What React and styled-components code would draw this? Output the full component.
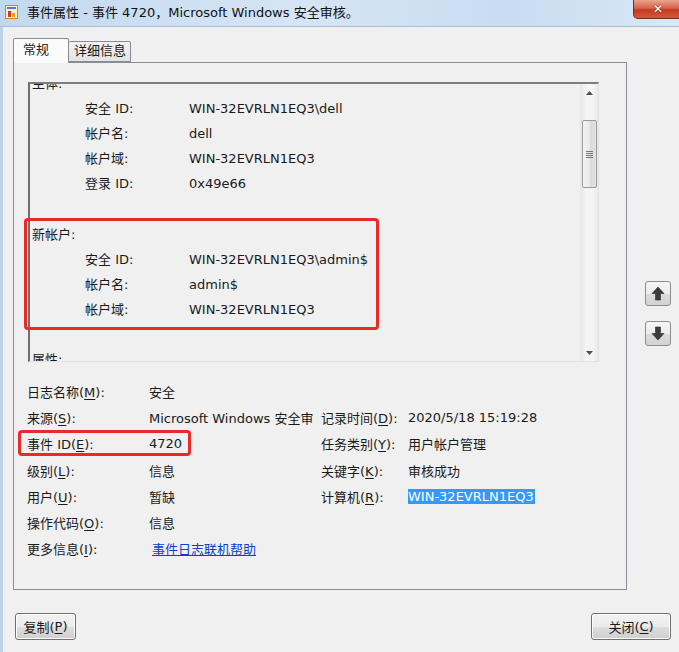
import React from "react";
import styled, { createGlobalStyle } from "styled-components";

const GlobalStyle = createGlobalStyle`
  html, body {
    margin: 0;
    padding: 0;
    background: #f0f0f0;
  }
  body {
    font-family: "DejaVu Sans", "Noto Sans CJK SC", sans-serif;
    font-size: 13px;
    color: #1a1a1a;
  }
`;

const Window = styled.div`
  position: relative;
  width: 679px;
  height: 652px;
  overflow: hidden;
  display: flex;
  flex-direction: column;
  background: #f0f0f0;
`;

const TitleBar = styled.div`
  height: 27px;
  flex: none;
  display: flex;
  align-items: flex-start;
  gap: 9px;
  padding: 5px 0 0 5px;
  box-sizing: border-box;
  background: linear-gradient(90deg, #c3d8ee 0%, #d6e5f5 45%, #c9dcf0 75%, #d9e7f5 100%);
  border-bottom: 1px solid #a6bfd9;
`;

const TitleText = styled.span`
  font-size: 13px;
  line-height: 15px;
  color: #111;
  white-space: nowrap;
`;

const CloseButton = styled.div`
  position: absolute;
  z-index: 3;
  top: 0;
  right: -4px;
  width: 48px;
  height: 18px;
  border: 1px solid #7a2a1c;
  border-top: none;
  border-radius: 0 0 5px 5px;
  background-color: #c9452c;
  background-image: linear-gradient(180deg, #e9a48f 0%, #d8634a 45%, #c2391f 55%, #d45a3c 100%);
  display: flex;
  align-items: center;
  justify-content: center;
  color: #fff;
  font-weight: bold;
  font-size: 12px;
  text-shadow: 0 0 2px #6b1e10;
`;

const Client = styled.div`
  flex: 1;
  display: flex;
  flex-direction: column;
  border-left: 3px solid #bcd2ea;
`;

const TopRow = styled.div`
  display: flex;
  padding: 11px 0 0 10px;
`;

const Main = styled.div`
  width: 614px;
  display: flex;
  flex-direction: column;
`;

const TabStrip = styled.div`
  height: 24px;
  display: flex;
  align-items: flex-end;
  position: relative;
  z-index: 1;
`;

const Tab = styled.div`
  box-sizing: border-box;
  height: ${(p) => (p.$active ? "25px" : "21px")};
  width: ${(p) => p.$width}px;
  padding-left: ${(p) => (p.$active ? "9px" : "5px")};
  border: 1px solid #898c95;
  border-bottom: ${(p) => (p.$active ? "none" : "1px solid #898c95")};
  border-left: ${(p) => (p.$active ? "1px solid #898c95" : "none")};
  border-radius: 2px 2px 0 0;
  background: ${(p) =>
    p.$active ? "#fbfbfb" : "linear-gradient(180deg, #f2f2f2 0%, #e3e3e3 100%)"};
  margin-bottom: ${(p) => (p.$active ? "-1px" : "0")};
  line-height: ${(p) => (p.$active ? "21px" : "18px")};
  font-size: 13px;
`;

const Panel = styled.div`
  box-sizing: border-box;
  height: 528px;
  border: 1px solid #898c95;
  background: #f0f0f0;
  padding: 19px 27px 0 14px;
`;

const TextBox = styled.div`
  position: relative;
  box-sizing: border-box;
  height: 280px;
  border-top: 2px solid #7d7d7d;
  border-left: 2px solid #6e6e6e;
  border-right: 1px solid #e2e2e2;
  border-bottom: 1px solid #e2e2e2;
  overflow: hidden;
  display: flex;
`;

const TextScroll = styled.div`
  flex: 1;
  overflow: hidden;
  padding-left: 2px;
`;

const TextContent = styled.div`
  margin-top: -13px;
`;

const Line = styled.div`
  height: 25.1px;
  line-height: 25.1px;
  display: flex;
  white-space: nowrap;
  padding-left: ${(p) => (p.$indent ? "53px" : "0")};
`;

const LineLabel = styled.span`
  width: 104px;
  flex: none;
`;

const ScrollBar = styled.div`
  width: 17px;
  flex: none;
  background: linear-gradient(90deg, #e8e8e8 0%, #f4f4f4 30%, #f4f4f4 70%, #e9e9e9 100%);
  border-left: 1px solid #e6e6e6;
  display: flex;
  flex-direction: column;
  align-items: center;
`;

const ScrollArrow = styled.div`
  height: 17px;
  width: 100%;
  display: flex;
  align-items: center;
  justify-content: center;
  flex: none;
`;

const Thumb = styled.div`
  margin-top: 19px;
  width: 15px;
  height: 68px;
  box-sizing: border-box;
  border: 1px solid #9a9a9a;
  border-radius: 2px;
  background: linear-gradient(90deg, #f4f4f4 0%, #e8e8e8 50%, #d8d8d8 51%, #e2e2e2 100%);
  display: flex;
  align-items: center;
  justify-content: center;
`;

const Grip = styled.div`
  width: 7px;
  height: 7px;
  background: repeating-linear-gradient(180deg, #7a7a7a 0 1px, transparent 1px 2px);
`;

const Spacer = styled.div`
  flex: 1;
`;

const InfoGrid = styled.div`
  margin: 16px 0 0 -1px;
  display: grid;
  grid-template-columns: 122px 172px 87px 1fr;
  grid-auto-rows: 26.3px;
  align-items: center;
  white-space: nowrap;
`;

const Cell = styled.div`
  min-width: 0;
  overflow: hidden;
  max-width: ${(p) => (p.$clip ? "164px" : "none")};
`;

const Key = styled.span`
  text-decoration: underline;
  text-underline-offset: 2px;
`;

const Selected = styled.span`
  background: #3399ff;
  color: #fff;
  padding: 1px 1px 2px 0;
`;

const HelpLink = styled.a`
  color: #0b3fd4;
  text-decoration: underline;
  margin-left: 3px;
`;

const Side = styled.div`
  display: flex;
  flex-direction: column;
  gap: 15px;
  padding: 243px 0 0 18px;
`;

const ArrowButton = styled.div`
  width: 26px;
  height: 25px;
  box-sizing: border-box;
  border: 1px solid #8d8d8d;
  border-radius: 3px;
  background: linear-gradient(180deg, #f6f6f6 0%, #ececec 50%, #dcdcdc 51%, #d2d2d2 100%);
  display: flex;
  align-items: center;
  justify-content: center;
`;

const Footer = styled.div`
  display: flex;
  justify-content: space-between;
  padding: 23px 8px 0 12px;
`;

const Button = styled.div`
  width: ${(p) => p.$width}px;
  height: 27px;
  box-sizing: border-box;
  border: 1px solid #707070;
  border-radius: 3px;
  background: linear-gradient(180deg, #f2f2f2 0%, #ebebeb 50%, #dddddd 51%, #cfcfcf 100%);
  box-shadow: inset 0 0 0 1px #fcfcfc;
  display: flex;
  align-items: center;
  justify-content: center;
  font-size: 13px;
`;

const Annotation = styled.div`
  position: absolute;
  left: ${(p) => p.$x}px;
  top: ${(p) => p.$y}px;
  width: ${(p) => p.$w}px;
  height: ${(p) => p.$h}px;
  box-sizing: border-box;
  border: 3px solid #ea2a2a;
  border-radius: 4px;
  pointer-events: none;
`;

const AppIcon = () => (
  <svg width="13" height="14" viewBox="0 0 13 14">
    <rect x="0.5" y="0.5" width="12" height="13" fill="#f7f1d0" stroke="#c98a1a" />
    <rect x="2" y="2" width="9" height="2" fill="#4a7fd0" />
    <rect x="3" y="6" width="3" height="6" fill="#d23a2a" />
    <rect x="7" y="8" width="3" height="4" fill="#e0a020" />
  </svg>
);

const Triangle = ({ up }) => (
  <svg width="7" height="4" viewBox="0 0 7 4">
    <path d={up ? "M0 4 L3.5 0 L7 4 Z" : "M0 0 L3.5 4 L7 0 Z"} fill="#4d4d4d" />
  </svg>
);

const BigArrow = ({ up }) => (
  <svg width="14" height="15" viewBox="0 0 14 15">
    <path
      d={
        up
          ? "M7 1 L13 7.5 L9.5 7.5 L9.5 14 L4.5 14 L4.5 7.5 L1 7.5 Z"
          : "M7 14 L13 7.5 L9.5 7.5 L9.5 1 L4.5 1 L4.5 7.5 L1 7.5 Z"
      }
      fill="#3c3c3c"
      stroke="#2a2a2a"
      strokeWidth="0.6"
      strokeLinejoin="round"
    />
  </svg>
);

const eventText = [
  { head: "主体:" },
  { label: "安全 ID:", value: "WIN-32EVRLN1EQ3\\dell" },
  { label: "帐户名:", value: "dell" },
  { label: "帐户域:", value: "WIN-32EVRLN1EQ3" },
  { label: "登录 ID:", value: "0x49e66" },
  { head: "" },
  { head: "新帐户:" },
  { label: "安全 ID:", value: "WIN-32EVRLN1EQ3\\admin$" },
  { label: "帐户名:", value: "admin$" },
  { label: "帐户域:", value: "WIN-32EVRLN1EQ3" },
  { head: "" },
  { head: "属性:" },
  { label: "SAM 帐户名:", value: "admin$" },
];

const Label = ({ text, k }) => (
  <>
    {text}(<Key>{k}</Key>):
  </>
);

export default function App() {
  return (
    <Window>
      <GlobalStyle />
      <TitleBar>
        <AppIcon />
        <TitleText>事件属性 - 事件 4720，Microsoft Windows 安全审核。</TitleText>
      </TitleBar>
      <CloseButton>✕</CloseButton>
      <Client>
        <TopRow>
          <Main>
            <TabStrip>
              <Tab $active $width={56}>常规</Tab>
              <Tab $width={62}>详细信息</Tab>
            </TabStrip>
            <Panel>
              <TextBox>
                <TextScroll>
                  <TextContent>
                    {eventText.map((l, i) =>
                      l.label ? (
                        <Line key={i} $indent>
                          <LineLabel>{l.label}</LineLabel>
                          <span>{l.value}</span>
                        </Line>
                      ) : (
                        <Line key={i}>{l.head}</Line>
                      )
                    )}
                  </TextContent>
                </TextScroll>
                <ScrollBar>
                  <ScrollArrow>
                    <Triangle up />
                  </ScrollArrow>
                  <Thumb>
                    <Grip />
                  </Thumb>
                  <Spacer />
                  <ScrollArrow>
                    <Triangle />
                  </ScrollArrow>
                </ScrollBar>
              </TextBox>
              <InfoGrid>
                <Cell><Label text="日志名称" k="M" /></Cell>
                <Cell>安全</Cell>
                <Cell />
                <Cell />

                <Cell><Label text="来源" k="S" /></Cell>
                <Cell $clip>Microsoft Windows 安全审核</Cell>
                <Cell><Label text="记录时间" k="D" /></Cell>
                <Cell>2020/5/18 15:19:28</Cell>

                <Cell><Label text="事件 ID" k="E" /></Cell>
                <Cell>4720</Cell>
                <Cell><Label text="任务类别" k="Y" /></Cell>
                <Cell>用户帐户管理</Cell>

                <Cell><Label text="级别" k="L" /></Cell>
                <Cell>信息</Cell>
                <Cell><Label text="关键字" k="K" /></Cell>
                <Cell>审核成功</Cell>

                <Cell><Label text="用户" k="U" /></Cell>
                <Cell>暂缺</Cell>
                <Cell><Label text="计算机" k="R" /></Cell>
                <Cell><Selected>WIN-32EVRLN1EQ3</Selected></Cell>

                <Cell><Label text="操作代码" k="O" /></Cell>
                <Cell>信息</Cell>
                <Cell />
                <Cell />

                <Cell><Label text="更多信息" k="I" /></Cell>
                <Cell><HelpLink href="#">事件日志联机帮助</HelpLink></Cell>
                <Cell />
                <Cell />
              </InfoGrid>
            </Panel>
          </Main>
          <Side>
            <ArrowButton><BigArrow up /></ArrowButton>
            <ArrowButton><BigArrow /></ArrowButton>
          </Side>
        </TopRow>
        <Footer>
          <Button $width={61}>复制(<Key>P</Key>)</Button>
          <Button $width={80}>关闭(<Key>C</Key>)</Button>
        </Footer>
      </Client>
      <Annotation $x={24} $y={218} $w={355} $h={112} />
      <Annotation $x={18} $y={430} $w={173} $h={26} />
    </Window>
  );
}
